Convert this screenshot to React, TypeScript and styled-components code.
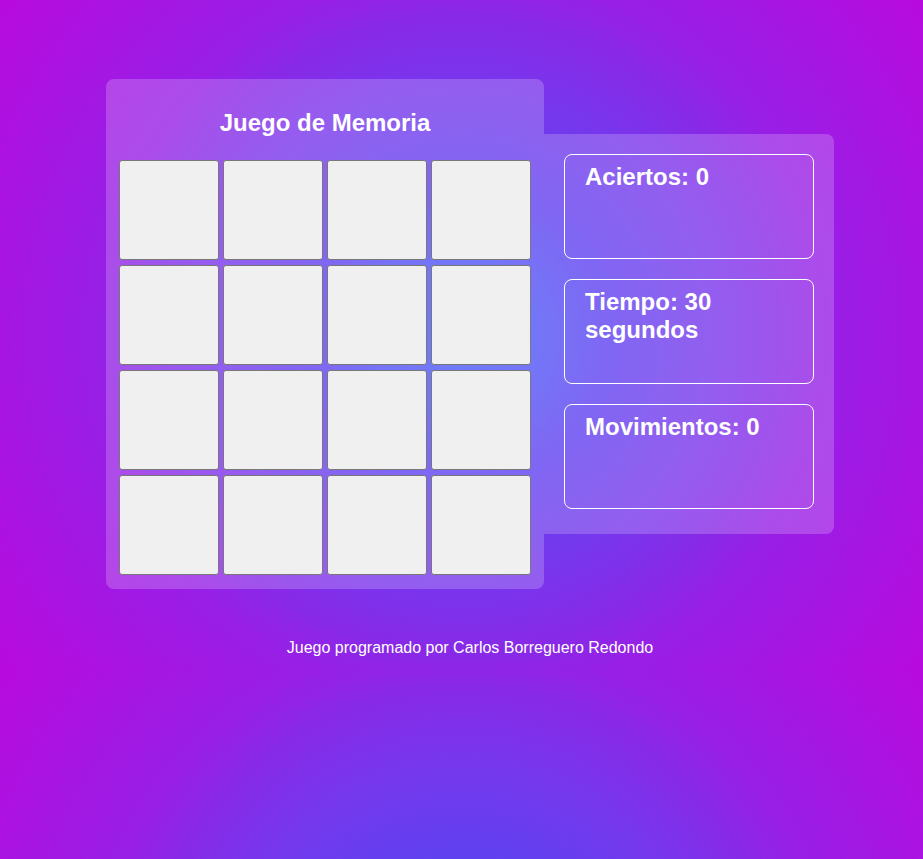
import React from "react";
import styled, { createGlobalStyle } from "styled-components";

const GlobalStyle = createGlobalStyle`
  html {
    min-height: 100%;
    background-color: #b80ade;
    background-image: radial-gradient(
      circle farthest-corner at 50% 50%,
      #4a5cf8 0%,
      #5253f6 14%,
      #6041f0 26%,
      #7737ec 43%,
      #872ae8 55%,
      #981fe6 64%,
      #b80ade 100%
    );
    background-size: 100% 670px;
    background-repeat: repeat-y;
  }
  body {
    margin: 0;
    font-family: "Liberation Sans", Arial, Helvetica, sans-serif;
    color: #ffffff;
  }
`;

const Page = styled.div`
  display: flex;
  flex-direction: column;
  align-items: center;
  padding: 79px 0 0 17px;
`;

const Game = styled.main`
  display: flex;
  align-items: center;
`;

const Board = styled.section`
  width: 438px;
  box-sizing: border-box;
  padding: 13px 13px 14px;
  background: rgba(255, 255, 255, 0.2);
  border-radius: 8px;
`;

const Title = styled.h2`
  margin: 17px 0 23px;
  font-size: 24px;
  line-height: 28px;
  font-weight: 700;
  text-align: center;
  color: #ffffff;
`;

const Grid = styled.div`
  display: grid;
  grid-template-columns: repeat(4, 100px);
  column-gap: 4px;
  row-gap: 5px;
`;

const Card = styled.button`
  width: 100px;
  height: 100px;
  box-sizing: border-box;
  padding: 0;
  background: #f0f0f0;
  border: 1px solid #777777;
  border-radius: 3px;
  cursor: pointer;
`;

const Stats = styled.aside`
  width: 290px;
  box-sizing: border-box;
  padding: 20px 20px 25px;
  display: flex;
  flex-direction: column;
  gap: 20px;
  background: rgba(255, 255, 255, 0.2);
  border-radius: 0 8px 8px 0;
`;

const StatBox = styled.div`
  height: 105px;
  box-sizing: border-box;
  border: 1px solid #ffffff;
  border-radius: 8px;
  padding: 8px 20px;
  font-size: 24px;
  font-weight: 700;
  line-height: normal;
  color: #ffffff;
`;

const Footer = styled.p`
  margin: 50px 0 16px;
  font-size: 16px;
  line-height: normal;
  text-align: center;
  color: #ffffff;
`;

export default function App() {
  const cards = Array.from({ length: 16 }, (_, i) => i);
  return (
    <>
      <GlobalStyle />
      <Page>
        <Game>
          <Board>
            <Title>Juego de Memoria</Title>
            <Grid>
              {cards.map((i) => (
                <Card key={i} aria-label={`Carta ${i + 1}`} />
              ))}
            </Grid>
          </Board>
          <Stats>
            <StatBox>Aciertos: 0</StatBox>
            <StatBox>Tiempo: 30 segundos</StatBox>
            <StatBox>Movimientos: 0</StatBox>
          </Stats>
        </Game>
        <Footer>Juego programado por Carlos Borreguero Redondo</Footer>
      </Page>
    </>
  );
}
